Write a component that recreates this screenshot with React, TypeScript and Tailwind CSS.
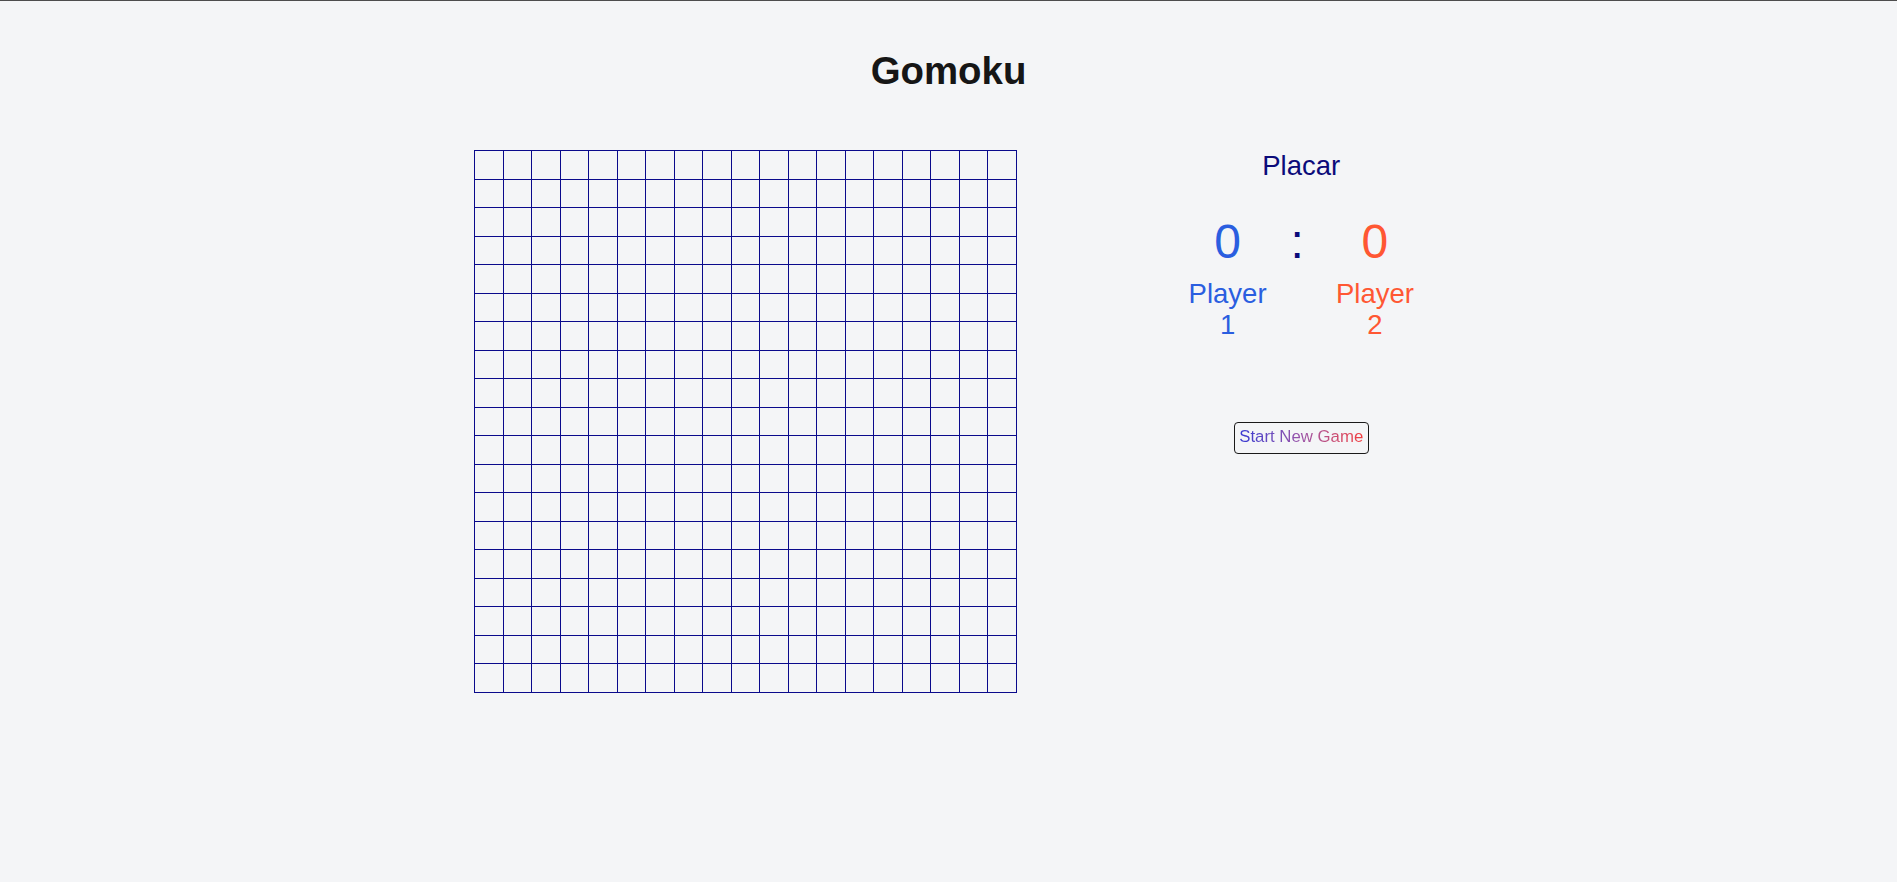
const SIZE = 19;

function Board() {
  const cells = Array.from({ length: SIZE * SIZE }, (_, i) => i);
  return (
    <div className="grid grid-cols-[repeat(19,28.5px)] border-l border-t border-[#0a0a8c] shrink-0">
      {cells.map((i) => (
        <div
          key={i}
          className="h-[28.5px] w-[28.5px] border-r border-b border-[#0a0a8c]"
        />
      ))}
    </div>
  );
}

function Score() {
  return (
    <div className="flex w-[243px] flex-col items-center">
      <h2 className="text-[27.5px] leading-[31.6px] text-[#0b0b7a]">Placar</h2>

      <div className="mt-[32px] flex items-start">
        {/* player 1 */}
        <div className="flex w-[90px] flex-col items-center text-center text-[#2a5ee0]">
          <span className="text-[48px] leading-[55.2px]">0</span>
          <span className="mt-[9px] text-[27.5px] leading-[31.6px]">Player 1</span>
        </div>

        <span className="ml-[18px] mr-[26px] text-[48px] leading-[55.2px] text-[#0b0b7a]">:</span>

        {/* player 2 */}
        <div className="flex w-[90px] flex-col items-center text-center text-[#ff5733]">
          <span className="text-[48px] leading-[55.2px]">0</span>
          <span className="mt-[9px] text-[27.5px] leading-[31.6px]">Player 2</span>
        </div>
      </div>

      <button className="mt-[81px] w-[135px] rounded-[4px] border border-[#1a1a1a] bg-transparent pt-[4px] pb-[7px] text-center text-[16.8px] leading-[19px]">
        <span className="bg-gradient-to-r from-[#3535d2] via-[#9a52a8] to-[#f23a3a] bg-clip-text text-transparent">
          Start New Game
        </span>
      </button>
    </div>
  );
}

export default function App() {
  return (
    <div className="min-h-screen border-t border-[#4d4d4d] bg-[#f4f5f7] font-['Liberation_Sans',Arial,sans-serif]">
      <h1 className="pt-[47.5px] text-center text-[38.4px] font-bold leading-[44px] text-[#161616]">
        Gomoku
      </h1>

      <div className="mt-[57.5px] flex items-start justify-center gap-[163px]">
        <Board />
        <Score />
      </div>
    </div>
  );
}
